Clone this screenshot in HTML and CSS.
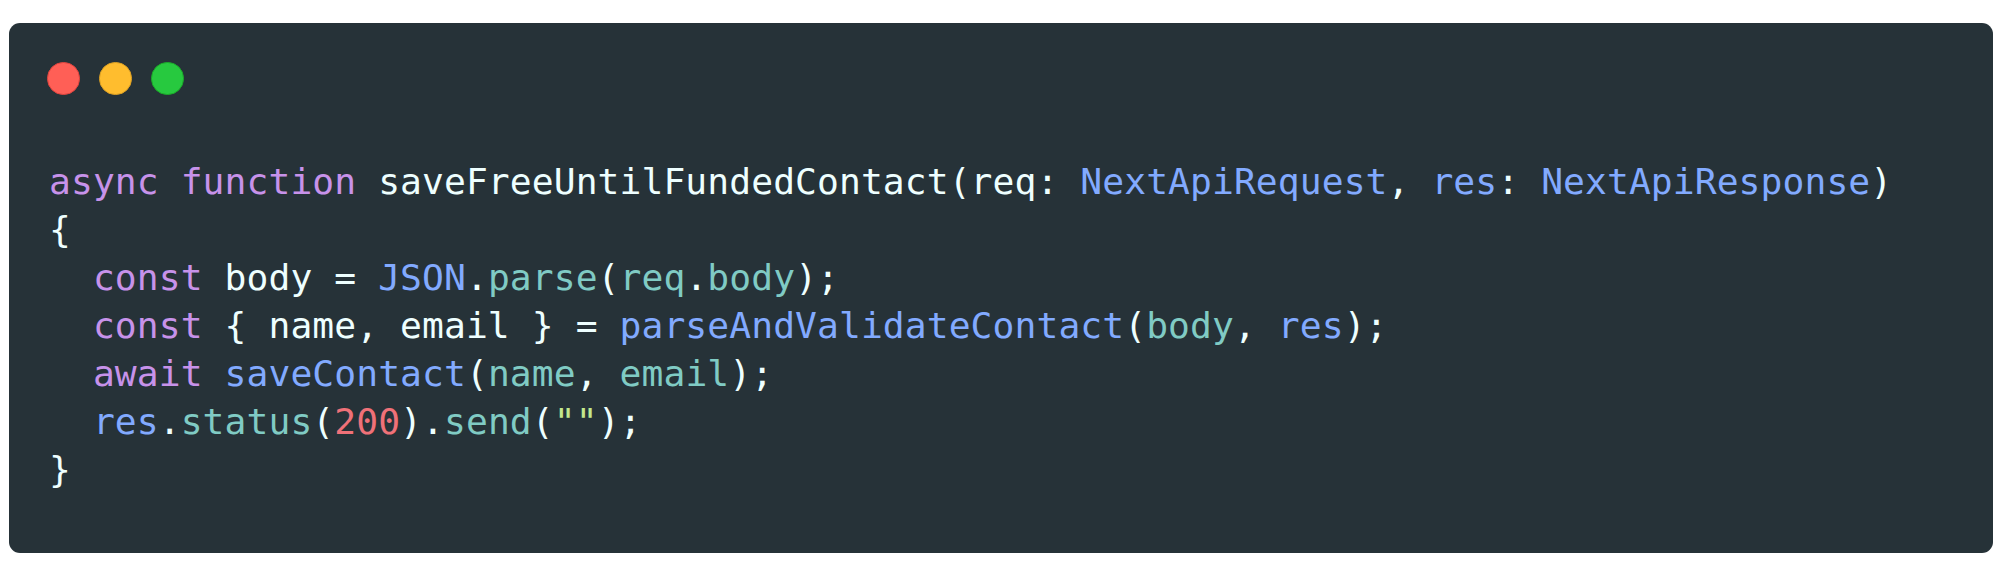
FILE: index.html
```html
<!DOCTYPE html>
<html lang="en">
<head>
<meta charset="utf-8">
<title>Code snippet</title>
<link rel="stylesheet" href="styles.css">
</head>
<body>
<div class="page">
  <div class="window">
    <div class="controls">
      <span class="dot dot-red"></span>
      <span class="dot dot-yellow"></span>
      <span class="dot dot-green"></span>
    </div>
    <pre class="code"><code><span class="kw">async</span> <span class="kw">function</span> saveFreeUntilFundedContact(req: <span class="ty">NextApiRequest</span>, <span class="ty">res</span>: <span class="ty">NextApiResponse</span>)
{
  <span class="kw">const</span> body = <span class="ty">JSON</span>.<span class="fn">parse</span>(<span class="fn">req</span>.<span class="fn">body</span>);
  <span class="kw">const</span> { name, email } = <span class="ty">parseAndValidateContact</span>(<span class="fn">body</span>, <span class="ty">res</span>);
  <span class="kw">await</span> <span class="ty">saveContact</span>(<span class="fn">name</span>, <span class="fn">email</span>);
  <span class="ty">res</span>.<span class="fn">status</span>(<span class="num">200</span>).<span class="fn">send</span>(<span class="str">""</span>);
}</code></pre>
  </div>
</div>
</body>
</html>
```

FILE: styles.css
```css
html, body {
  margin: 0;
  padding: 0;
  background: #ffffff;
}

.page {
  padding: 23px 7px 24px 9px;
}

.window {
  background: #263238;
  border-radius: 11px;
  height: 530px;
  box-sizing: border-box;
  padding: 39px 40px 0 40px;
}

.controls {
  display: flex;
  gap: 19.5px;
  margin-left: -2px;
}

.dot {
  width: 32.5px;
  height: 32.5px;
  border-radius: 50%;
  box-sizing: border-box;
}

.dot-red {
  background: #ff5f56;
  border: 1px solid #e0443e;
}

.dot-yellow {
  background: #ffbd2e;
  border: 1px solid #dea123;
}

.dot-green {
  background: #27c93f;
  border: 1px solid #1aab29;
}

.code {
  margin: 63px 0 0 0;
  font-family: "DejaVu Sans Mono", monospace;
  font-size: 36.3px;
  letter-spacing: 0.09px;
  line-height: 48px;
  color: #eeffff;
  white-space: pre;
}

.code code {
  font-family: inherit;
}

.kw { color: #c792ea; }
.ty { color: #82aaff; }
.fn { color: #80cbc4; }
.num { color: #f07178; }
.str { color: #c3e88d; }
```
